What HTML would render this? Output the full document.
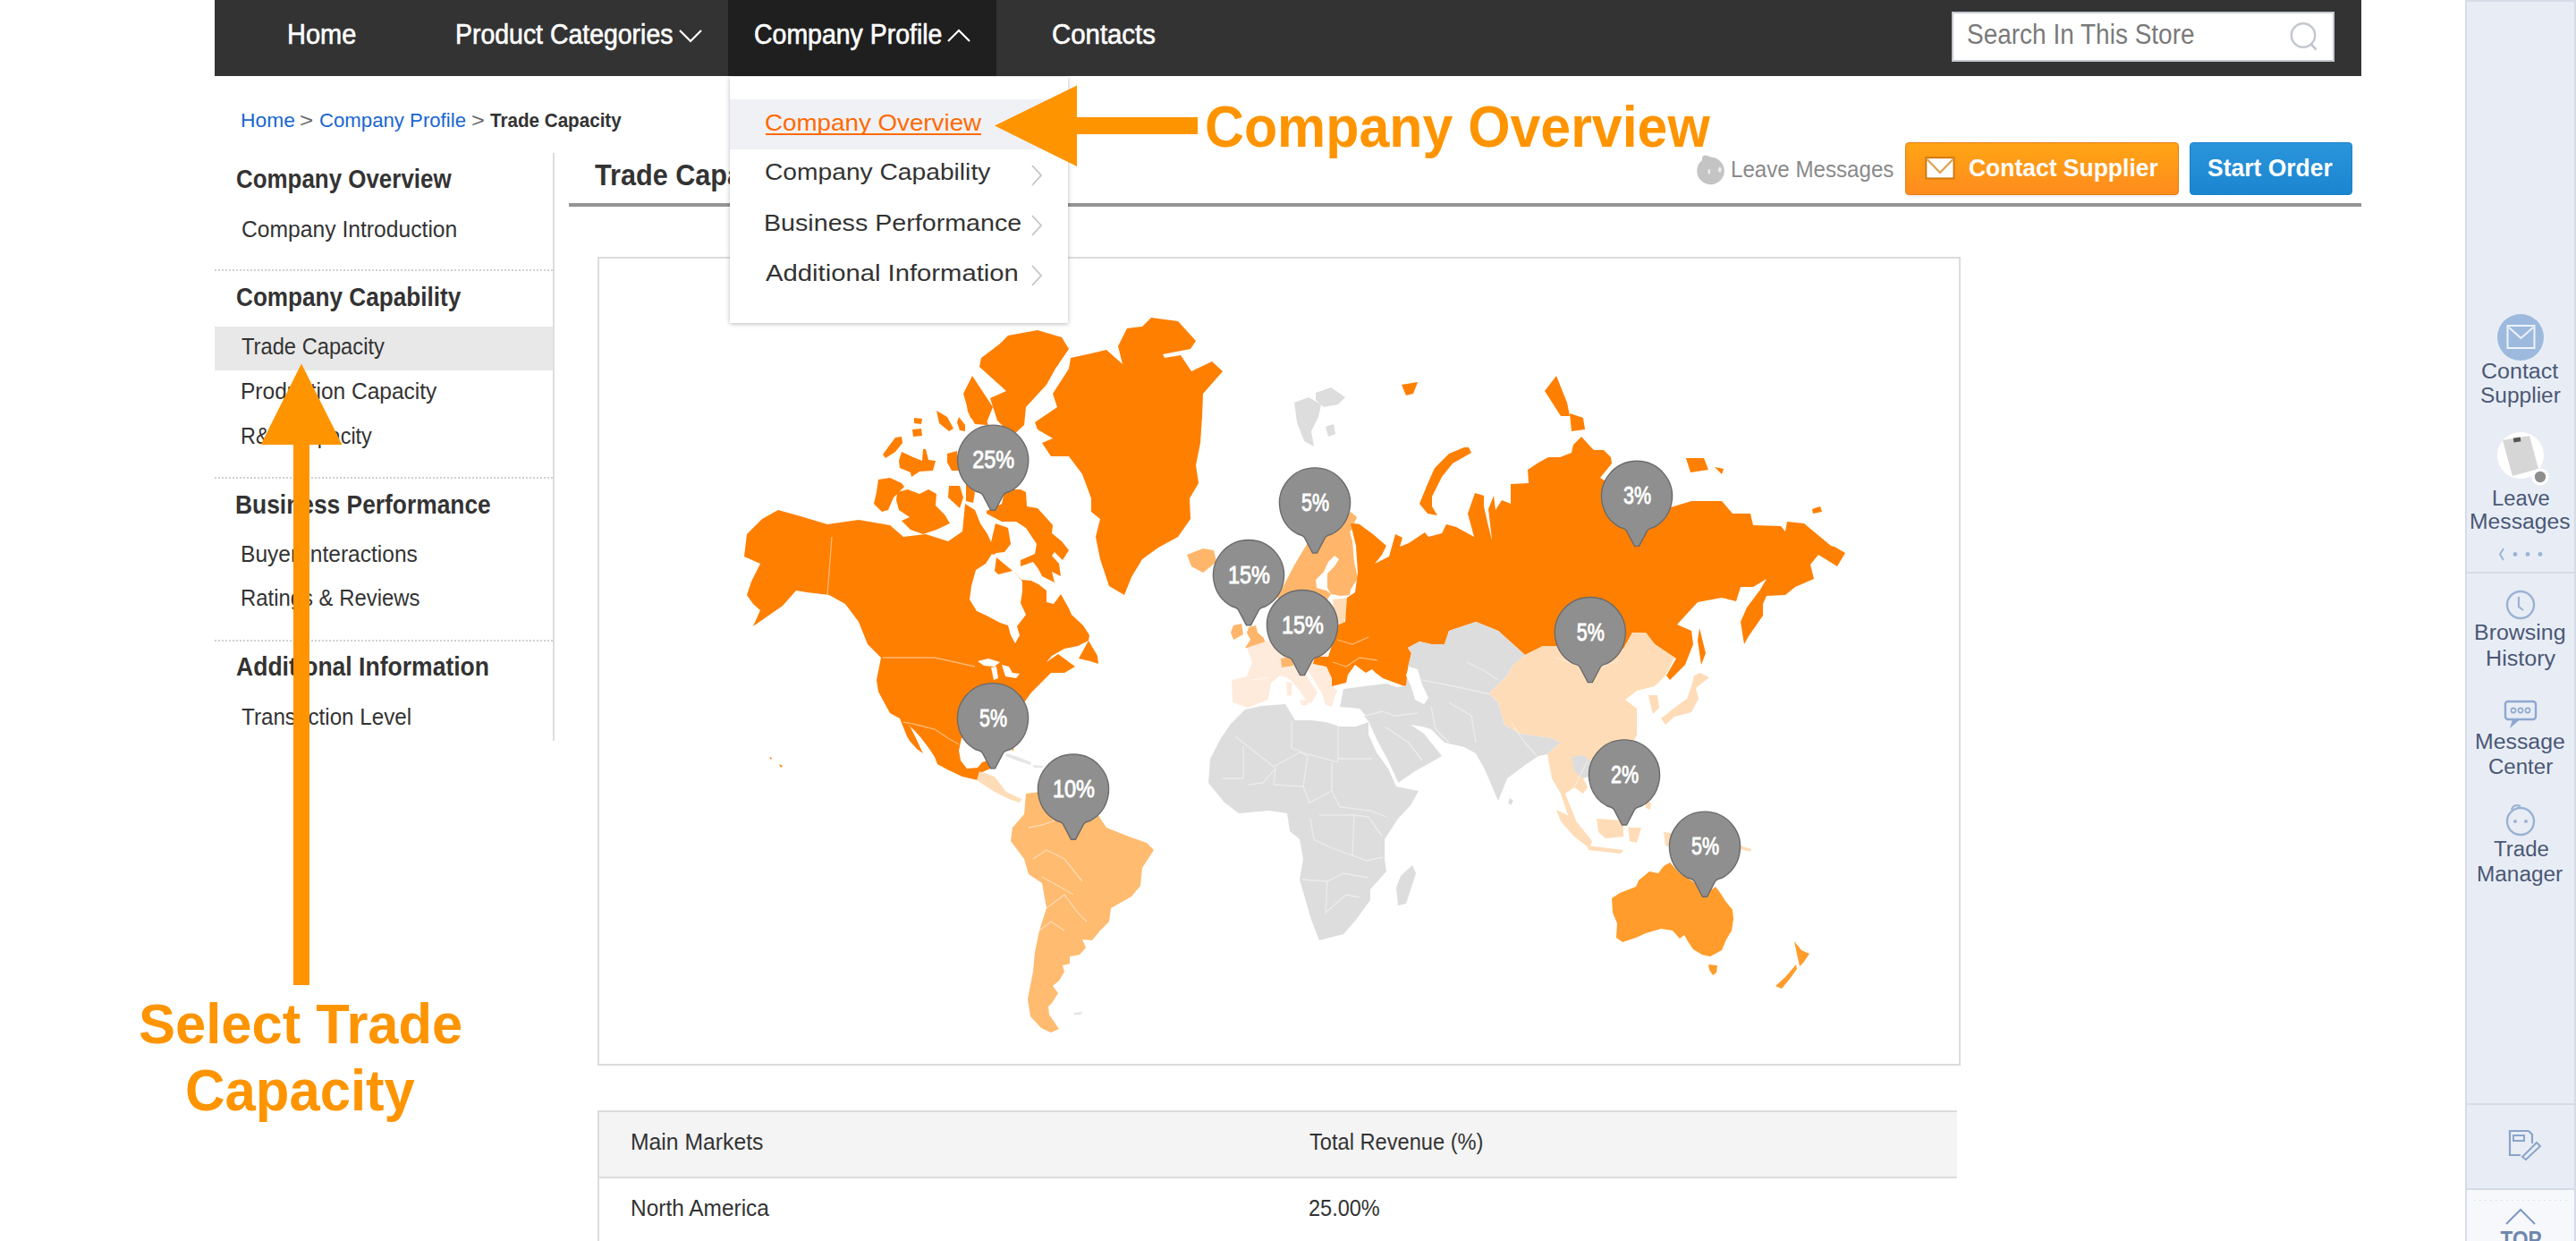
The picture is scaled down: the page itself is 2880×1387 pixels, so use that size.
<!DOCTYPE html>
<html><head><meta charset="utf-8">
<style>
html,body{margin:0;padding:0;}
body{width:2880px;height:1387px;overflow:hidden;background:#fff;position:relative;font-family:"Liberation Sans",sans-serif;}
.a{position:absolute;}
.tx{position:absolute;line-height:1;white-space:nowrap;transform-origin:0 0;z-index:10;}
#nav{left:240px;top:0;width:2400px;height:85px;background:#333;}
#navact{left:814px;top:0;width:300px;height:85px;background:#1f1f1f;}
#search{left:2182px;top:13px;width:424px;height:52px;background:#fff;border:2px solid #c6cad2;}
#rs{left:2756px;top:0;width:120px;height:1387px;background:#e8edf5;border-left:2px solid #d5dce8;border-right:2px solid #d5dce8;border-top:2px solid #d5dce8;}
#rsbot{left:2758px;top:1330px;width:120px;height:57px;background:#f6f8fb;}
.hl{height:2px;background:#d5dce8;}
#vline{left:618px;top:171px;width:2px;height:657px;background:#dedede;}
.dot{left:240px;width:378px;height:0;border-top:2px dotted #d0d0d0;}
#hlrow{left:240px;top:365px;width:378px;height:49px;background:#e8e8e8;}
#tul{left:636px;top:227px;width:2004px;height:4px;background:#959595;}
#cbtn{left:2130px;top:159px;width:304px;height:57px;border:1px solid #e57d12;border-radius:4px;background:linear-gradient(#ffa514,#ff8b1e);box-shadow:0 2px 2px rgba(0,0,0,0.08);}
#sbtn{left:2448px;top:159px;width:180px;height:57px;border:1px solid #1681cc;border-radius:4px;background:linear-gradient(#2a95db,#1b85d0);}
#mapbox{left:668px;top:287px;width:1520px;height:900px;border:2px solid #dcdcdc;}
#tbl{left:668px;top:1241px;width:1518px;height:200px;border-left:2px solid #dcdcdc;border-top:2px solid #dcdcdc;}
#thead{left:670px;top:1243px;width:1518px;height:72px;background:#f4f4f4;border-bottom:2px solid #dcdcdc;}
#dd{left:816px;top:86px;width:378px;height:275px;background:#fff;box-shadow:0 1px 5px rgba(0,0,0,0.28);z-index:5;}
#ddhl{left:816px;top:111px;width:378px;height:56px;background:#f0f1f5;z-index:6;}
.ddt{z-index:7;}
#mapsvg{left:0;top:0;z-index:2;}
#annsvg{left:0;top:0;z-index:20;}
#iconsvg{left:0;top:0;z-index:3;}
</style></head><body>
<div class="a" id="nav"></div>
<div class="a" id="navact"></div>
<div class="a" id="search"></div>
<div class="a" id="rs"></div>
<div class="a" id="rsbot"></div>
<div class="a hl" style="left:2758px;top:639px;width:120px;height:2px;"></div>
<div class="a hl" style="left:2758px;top:1233px;width:120px;"></div>
<div class="a hl" style="left:2758px;top:1328px;width:120px;"></div>
<div class="a" id="vline"></div>
<div class="a dot" style="top:301px"></div>
<div class="a dot" style="top:533px"></div>
<div class="a dot" style="top:715px"></div>
<div class="a" id="hlrow"></div>
<div class="a" id="tul"></div>
<div class="a" id="cbtn"></div>
<div class="a" id="sbtn"></div>
<div class="a" id="mapbox"></div>
<div class="a" id="tbl"></div>
<div class="a" id="thead"></div>
<div class="a" id="dd"></div>
<div class="a" id="ddhl"></div>
<div class="a" style="left:856px;top:149px;width:241px;height:2px;background:#ff6a00;z-index:8;"></div>
<svg class="a" id="iconsvg" width="2880" height="1387" viewBox="0 0 2880 1387">
 <!-- nav carets -->
 <polyline points="760,34 772,46 784,34" fill="none" stroke="#fff" stroke-width="2.2"/>
 <polyline points="1060,46 1072,34 1084,46" fill="none" stroke="#fff" stroke-width="2.2"/>
 <!-- search icon -->
 <circle cx="2575" cy="39.5" r="13.2" fill="none" stroke="#c3c7cf" stroke-width="2.5"/>
 <line x1="2583.5" y1="49" x2="2589.5" y2="55.5" stroke="#c3c7cf" stroke-width="2.6"/>
 <!-- leave messages icon -->
 <circle cx="1912.5" cy="191" r="15.3" fill="#c4c4c4"/>
 <path d="M1903 180 Q1902 172 1909 174 Q1914 176 1916 177 Z" fill="#c4c4c4"/>
 <ellipse cx="1910.8" cy="191.8" rx="1.4" ry="3" fill="#ececec"/><ellipse cx="1922.8" cy="189.8" rx="1.8" ry="3" fill="#ececec"/>
 <!-- mail icon on button -->
 <rect x="2153.3" y="176.2" width="31.2" height="23.2" fill="#fff" stroke="#d07a10" stroke-width="2"/>
 <polyline points="2154.5,178 2169,193 2183.5,178" fill="none" stroke="#dca050" stroke-width="2.2"/>
 <!-- right sidebar icons -->
 <circle cx="2818" cy="377" r="26" fill="#9dbade"/>
 <rect x="2803.5" y="364" width="30" height="25" fill="none" stroke="#eef3fa" stroke-width="2"/>
 <polyline points="2805,366 2818.5,378 2832,366" fill="none" stroke="#eef3fa" stroke-width="2"/>
 <circle cx="2818" cy="509" r="26" fill="#fff"/>
 <polygon points="2798,492 2828,487 2838,524 2809,532" fill="#d6d6d6"/>
 <rect x="2810" y="489" width="8" height="5" fill="#555" transform="rotate(-9 2814 491)"/>
 <circle cx="2840" cy="533" r="9.5" fill="#fff"/><circle cx="2840" cy="533" r="6.2" fill="#8e8e8e"/>
 <polyline points="2799,613 2795,619.5 2799,626" fill="none" stroke="#9db4d6" stroke-width="2"/>
 <circle cx="2812" cy="619.5" r="2.4" fill="#9db4d6"/><circle cx="2826" cy="619.5" r="2.4" fill="#9db4d6"/><circle cx="2840" cy="619.5" r="2.4" fill="#9db4d6"/>
 <circle cx="2818" cy="676" r="15" fill="none" stroke="#9bb2d4" stroke-width="2.4"/>
 <polyline points="2816,667 2816,678 2821,682" fill="none" stroke="#9bb2d4" stroke-width="2.2"/>
 <rect x="2801" y="784" width="34" height="20" rx="3" fill="none" stroke="#8ea8cf" stroke-width="2.4"/>
 <polyline points="2810,804 2808,811 2816,804" fill="#8ea8cf" stroke="#8ea8cf" stroke-width="2"/>
 <circle cx="2810" cy="794" r="2.6" fill="none" stroke="#8ea8cf" stroke-width="1.6"/><circle cx="2818" cy="794" r="2.6" fill="none" stroke="#8ea8cf" stroke-width="1.6"/><circle cx="2826" cy="794" r="2.6" fill="none" stroke="#8ea8cf" stroke-width="1.6"/>
 <circle cx="2818" cy="918" r="15" fill="none" stroke="#9bb2d4" stroke-width="2.4"/>
 <circle cx="2812" cy="918" r="2" fill="#9bb2d4"/><circle cx="2824" cy="918" r="2" fill="#9bb2d4"/>
 <path d="M2808 905 Q2810 898 2818 901" fill="none" stroke="#9bb2d4" stroke-width="2.2"/>
 <path d="M2827 1264 L2806 1264 L2806 1291 L2818 1291" fill="none" stroke="#8aa4cb" stroke-width="2.2"/>
 <path d="M2827 1264 L2831 1268 L2831 1278" fill="none" stroke="#8aa4cb" stroke-width="2.2"/>
 <rect x="2810" y="1269" width="12" height="6" fill="none" stroke="#8aa4cb" stroke-width="2"/>
 <path d="M2820 1293 L2836 1277 L2840 1281 L2824 1296 Z" fill="none" stroke="#8aa4cb" stroke-width="2"/>
 <polyline points="2802,1368 2818,1352 2834,1368" fill="none" stroke="#7f9ac2" stroke-width="2"/>
 <text x="2818.5" y="1394" font-family="Liberation Sans" font-weight="bold" font-size="26" fill="#6f87ad" text-anchor="middle" textLength="46" lengthAdjust="spacingAndGlyphs">TOP</text>
 <line x1="2766" y1="1341.5" x2="2872" y2="1341.5" stroke="#dde3ec" stroke-width="1" stroke-dasharray="2 4"/>
 <!-- dropdown chevrons -->
</svg>
<svg class="a" width="2880" height="1387" viewBox="0 0 2880 1387" style="left:0;top:0;z-index:9">
 <polyline points="1154,185 1164,196 1154,207" fill="none" stroke="#c4c4c4" stroke-width="1.8"/>
 <polyline points="1154,241 1164,252 1154,263" fill="none" stroke="#c4c4c4" stroke-width="1.8"/>
 <polyline points="1154,297 1164,308 1154,319" fill="none" stroke="#c4c4c4" stroke-width="1.8"/>
</svg>
<svg class="a" id="mapsvg" width="2880" height="1387" viewBox="0 0 2880 1387">
<polygon fill="#ff7f00" points="835,597 852,580 870,570 895,577 925,586 960,581 995,587 1010,600 1035,597 1060,605 1076,594 1079,563 1090,570 1096,585 1104,597 1108,606 1113,585 1127,590 1130,608 1123,617 1114,618 1109,621 1136,641 1142,648 1153,649 1161,653 1170,660 1170,673 1178,675 1186,664 1195,680 1198,687 1211,699 1218,710 1217,716 1205,722 1190,725 1176,733 1170,740 1183,731 1202,745 1190,752 1175,752 1167,760 1153,774 1145,785 1138,800 1132,815 1133,840 1125,828 1110,822 1095,818 1080,822 1075,825 1072,839 1074,850 1081,859 1093,858 1098,852 1104,850 1107,859 1096,864 1093,872 1076,868 1059,860 1048,854 1045,846 1039,837 1030,825 1022,816 1015,810 1018,813 1023,823 1030,838 1032,842 1025,837 1017,828 1014,823 1008,808 1006,803 995,797 989,786 982,773 980,760 985,735 970,720 960,695 945,675 927,665 902,662 890,660 875,677 842,700 850,682 842,675 835,665 840,650 850,630 832,622"/>
<polygon fill="#ff7f00" points="1206,736 1217,716 1227,733 1228,742 1219,739"/>
<polygon fill="#ffffff" points="1109,619 1102,630 1091,637 1086,655 1084,670 1092,683 1103,688 1118,696 1127,699 1130,710 1135,719 1140,710 1137,700 1147,687 1141,674 1143,661 1143,650 1136,641"/>
<polygon fill="#ff7f00" points="1114,623 1132,638 1116,642 1112,638"/>
<polygon fill="#ffffff" points="1093,739 1105,736 1118,740 1112,745 1100,744"/>
<polygon fill="#ffffff" points="1108,746 1114,745 1116,758 1111,760"/>
<polygon fill="#ffffff" points="1120,743 1128,745 1132,752 1140,753 1136,758 1124,756"/>
<polygon fill="#ff7f00" points="1022,467 1031,468 1030,474 1022,473"/>
<polygon fill="#ff7f00" points="1020,480 1030,479 1031,487 1021,488"/>
<polygon fill="#ff7f00" points="1008,488 1009,495 1001,505 990,512 987,508 995,497 1001,489"/>
<polygon fill="#ff7f00" points="1008,505 1021,511 1031,515 1032,502 1035,502 1038,514 1046,515 1043,526 1028,527 1019,533 1018,528 1006,523 1005,515"/>
<polygon fill="#ff7f00" points="1047,459 1059,466 1066,479 1061,482 1050,473"/>
<polygon fill="#ff7f00" points="1072,466 1079,475 1079,482 1073,481 1070,472"/>
<polygon fill="#ff7f00" points="1059,507 1070,504 1072,526 1064,526 1059,517"/>
<polygon fill="#ff7f00" points="982,536 995,534 1008,540 1011,544 999,556 993,570 986,572 977,563 980,550"/>
<polygon fill="#ff7f00" points="1003,550 1015,547 1028,552 1038,547 1047,552 1046,565 1056,575 1062,585 1047,592 1032,597 1018,592 1008,582 1017,578 1005,570 1002,559"/>
<polygon fill="#ff7f00" points="1061,543 1073,543 1077,556 1073,568 1060,556"/>
<polygon fill="#ff7f00" points="1080,541 1090,550 1088,562 1080,560"/>
<polygon fill="#ff7f00" points="1103,571 1120,563 1123,549 1131,547 1141,547 1147,550 1148,566 1160,568 1170,579 1177,587 1176,596 1187,605 1195,615 1188,626 1179,617 1176,621 1184,630 1186,644 1176,639 1179,651 1165,644 1161,636 1155,628 1141,633 1141,626 1157,619 1159,608 1153,599 1147,590 1136,583 1120,583 1103,574"/>
<polygon fill="#ff7f00" points="1079,440 1092,445 1105,475 1090,474 1082,460"/>
<polygon fill="#ff7f00" points="1127,375 1160,369 1187,377 1195,390 1180,412 1170,430 1147,455 1145,475 1132,487 1115,470 1107,445 1125,437 1095,410 1097,400 1117,385"/>
<polygon fill="#ff7f00" points="1087,420 1110,455 1102,475 1085,467 1077,440"/>
<polygon fill="#ff7f00" points="1287,355 1317,359 1337,381 1331,390 1300,396 1302,400 1320,397 1332,415 1355,404 1367,415 1345,440 1344,465 1342,495 1337,520 1340,540 1330,557 1331,580 1317,600 1295,612 1277,625 1265,645 1257,665 1240,655 1230,625 1225,600 1230,580 1220,572 1220,557 1210,530 1195,510 1175,510 1165,495 1177,490 1160,480 1157,472 1182,455 1177,440 1195,412 1197,400 1220,395 1237,391 1255,407 1250,387 1260,367 1277,365"/>
<polygon fill="#ffb66b" points="1327,620 1345,613 1357,615 1360,628 1345,640 1332,633"/>
<polygon fill="#ffb66b" points="1396,701 1404,699 1406,707 1413,713 1415,720 1404,724 1392,724 1398,715 1394,707"/>
<polygon fill="#ffb66b" points="1379,699 1388,697 1390,709 1379,715 1376,707"/>
<polygon fill="#ffebdc" points="1394,724 1430,712 1470,710 1485,734 1470,734 1468,742 1483,745 1489,758 1489,767 1495,772 1491,782 1489,790 1482,788 1478,775 1470,762 1462,748 1458,749 1465,762 1473,774 1466,786 1461,784 1453,772 1444,761 1438,757 1431,755 1421,763 1418,782 1395,791 1378,785 1377,760 1394,756 1400,740"/>
<polygon fill="#ffebdc" points="1453,782 1463,783 1462,788 1455,788"/>
<polygon fill="#ffebdc" points="1438,762 1444,763 1444,777 1439,778"/>
<polygon fill="#ffb66b" points="1432,736 1444,734 1446,744 1433,746"/>
<polygon fill="#ffb66b" points="1510,572 1517,578 1514,585 1519,585 1509,594 1512,605 1514,628 1518,646 1510,659 1509,665 1499,666 1488,664 1470,690 1455,690 1440,680 1428,668 1448,630 1463,605 1480,595 1499,585"/>
<polygon fill="#ffffff" points="1492,621 1497,625 1492,633 1484,641 1484,657 1488,664 1483,660 1472,657 1471,648 1480,639 1485,628"/>
<polygon fill="#ffdcb8" points="1490,670 1508,668 1506,684 1501,700 1492,698"/>
<polygon fill="#ff7f00" points="1510,585 1520,586 1535,597 1550,610 1545,620 1537,630 1553,622 1560,597 1568,601 1565,611 1575,607 1593,595 1597,600 1612,596 1617,586 1628,589 1648,600 1641,574 1649,551 1659,554 1659,566 1663,584 1668,604 1656,616 1668,603 1664,569 1670,554 1672,570 1679,559 1689,563 1689,541 1709,540 1708,525 1720,517 1731,511 1744,511 1757,506 1759,497 1768,488 1778,499 1782,503 1793,503 1801,511 1802,518 1789,534 1830,560 1868,567 1891,560 1925,560 1937,574 1957,574 1960,587 1991,588 1996,594 1998,583 2017,585 2047,610 2051,611 2063,618 2054,633 2033,620 2024,631 2028,647 2007,656 1996,665 1975,666 1971,675 1971,688 1955,711 1950,720 1946,695 1953,679 1968,659 1975,647 1960,656 1946,656 1941,672 1925,668 1898,673 1875,698 1891,705 1893,720 1884,743 1867,760 1863,755 1874,736 1850,720 1840,707 1825,707 1815,725 1785,722 1725,722 1705,732 1675,705 1650,695 1620,705 1615,720 1600,720 1587,717 1574,724 1578,730 1574,746 1576,746 1573,768 1546,758 1538,752 1534,748 1527,752 1515,743 1507,754 1505,763 1489,767 1489,758 1483,745 1468,742 1470,734 1485,734 1491,715 1495,699 1504,695 1506,668 1515,662 1518,640 1516,610"/>
<polygon fill="#ff7f00" points="1642,500 1645,506 1624,518 1612,533 1601,555 1601,566 1607,576 1596,574 1587,563 1596,541 1604,523 1620,507 1637,500"/>
<polygon fill="#ff7f00" points="1727,437 1740,420 1752,450 1755,465 1745,465"/>
<polygon fill="#ff7f00" points="1755,462 1770,467 1772,480 1757,482"/>
<polygon fill="#ff7f00" points="1567,430 1585,427 1580,440 1572,442"/>
<polygon fill="#ff7f00" points="1885,512 1905,512 1910,525 1890,528"/>
<polygon fill="#ff7f00" points="1917,522 1927,524 1925,530"/>
<polygon fill="#ff7f00" points="1900,702 1907,730 1902,743 1898,716"/>
<polygon fill="#ff7f00" points="2026,569 2035,566 2037,572 2027,574"/>
<polygon fill="#dddddd" points="1447,450 1463,444 1477,452 1474,466 1466,482 1469,499 1458,493 1450,472"/>
<polygon fill="#dddddd" points="1471,439 1488,433 1504,444 1496,452 1480,455 1471,447"/>
<polygon fill="#dddddd" points="1482,477 1491,474 1493,485 1485,488"/>
<polygon fill="#dddddd" points="1525,800 1530,815 1545,845 1560,877 1582,862 1612,845 1600,830 1592,820 1577,810 1590,812 1600,815 1615,830 1637,835 1650,842 1660,860 1675,895 1685,870 1705,855 1720,845 1730,843 1745,830 1735,825 1700,820 1682,810 1675,785 1665,775 1685,755 1690,745 1705,732 1675,705 1650,695 1620,705 1615,720 1600,720 1587,717 1574,724 1578,730 1574,746 1572,766 1562,768 1550,764 1525,767 1502,770 1500,780 1498,790 1520,792 1527,800"/>
<polygon fill="#ffffff" points="1524,799 1530,806 1540,828 1552,850 1562,872 1566,880 1560,880 1548,858 1536,836 1526,814 1521,802"/>
<polygon fill="#ffffff" points="1575,745 1585,748 1590,765 1597,780 1592,787 1582,782 1578,768 1572,755"/>
<polygon fill="#dddddd" points="1688,892 1692,895 1689,900 1686,897"/>
<polygon fill="#dddddd" points="1376,809 1392,793 1410,789 1437,787 1448,805 1466,805 1482,807 1498,812 1516,812 1530,807 1530,821 1539,841 1552,859 1561,879 1586,884 1577,900 1563,915 1548,938 1548,960 1550,974 1532,994 1532,1006 1516,1028 1502,1044 1475,1051 1466,1028 1453,983 1457,960 1453,938 1442,929 1439,909 1419,906 1385,909 1369,897 1351,875 1353,848 1365,825"/>
<polygon fill="#dddddd" points="1579,967 1583,976 1572,1010 1563,1012 1561,992 1566,979"/>
<polygon fill="#ffbb70" points="1147,887 1162,885 1190,895 1225,907 1237,925 1262,935 1282,942 1290,950 1277,970 1275,990 1265,1002 1242,1015 1240,1030 1230,1040 1221,1051 1210,1050 1214,1059 1207,1067 1196,1069 1196,1077 1188,1079 1190,1086 1184,1096 1177,1102 1183,1110 1176,1121 1172,1125 1173,1134 1184,1150 1175,1154 1164,1149 1152,1136 1149,1117 1151,1106 1155,1086 1157,1064 1162,1040 1170,1015 1165,987 1150,977 1145,960 1130,940 1132,925 1145,910"/>
<polygon fill="#ffdcb8" points="1092,872 1095,862 1112,868 1125,885 1142,893 1140,897 1128,893 1112,885"/>
<polygon fill="#ffdcb8" points="1705,732 1725,722 1785,722 1815,725 1825,707 1840,707 1850,720 1872,735 1862,755 1850,767 1830,772 1817,782 1830,792 1830,805 1830,822 1822,835 1800,845 1780,852 1775,855 1770,870 1775,880 1770,887 1760,880 1750,887 1762,917 1755,917 1745,887 1735,870 1730,843 1745,830 1735,825 1700,820 1682,810 1675,785 1665,775 1685,755 1690,745"/>
<polygon fill="#dddddd" points="1757,846 1770,844 1778,850 1777,868 1770,870 1760,862"/>
<polygon fill="#ffdcb8" points="1843,777 1853,777 1855,791 1848,798 1845,786"/>
<polygon fill="#ffdcb8" points="1901,752 1911,757 1896,769 1899,781 1891,796 1872,801 1862,810 1857,803 1872,791 1886,781 1891,767 1894,755"/>
<polygon fill="#ffdcb8" points="1740,905 1760,915 1780,940 1777,948 1760,935 1745,918"/>
<polygon fill="#ffdcb8" points="1775,945 1815,950 1812,954 1776,950"/>
<polygon fill="#ffdcb8" points="1785,915 1815,917 1815,935 1795,937 1787,930"/>
<polygon fill="#ffdcb8" points="1820,925 1835,925 1830,942 1822,940"/>
<polygon fill="#ffdcb8" points="1860,930 1900,935 1930,955 1925,965 1890,955 1862,945"/>
<polygon fill="#e6e6e6" points="1125,842 1138,846 1153,852 1152,855 1137,850 1124,845"/>
<polygon fill="#e6e6e6" points="1155,855 1167,856 1166,858 1156,858"/>
<polygon fill="#ffdcb8" points="1839,895 1846,897 1845,905 1840,903"/>
<polygon fill="#ffdcb8" points="1945,945 1958,949 1957,952 1946,949"/>
<polygon fill="#ff7f00" points="860,846 863,847 862,849"/>
<polygon fill="#ff7f00" points="871,854 875,856 873,858"/>
<polygon fill="#e6e6e6" points="1200,1132 1210,1131 1209,1134 1201,1134"/>
<polygon fill="#ff9c2b" points="1802,1004 1811,998 1829,991 1832,984 1844,974 1854,976 1860,968 1867,964 1878,976 1894,986 1906,1000 1918,991 1924,999 1929,1007 1937,1017 1938,1027 1936,1040 1930,1050 1925,1062 1912,1069 1903,1067 1893,1061 1887,1052 1883,1045 1878,1049 1870,1040 1857,1038 1840,1043 1829,1048 1814,1053 1807,1048 1808,1032 1803,1020"/>
<polygon fill="#ff9c2b" points="1910,1078 1920,1079 1919,1087 1915,1090 1911,1084"/>
<polygon fill="#ff9c2b" points="2006,1052 2014,1062 2023,1066 2016,1076 2012,1080 2010,1071"/>
<polygon fill="#ff9c2b" points="2008,1078 2009,1083 2001,1094 1992,1105 1985,1102 1996,1092"/>
<polyline fill="none" stroke="#ffffff" stroke-opacity="0.45" stroke-width="1.3" points="1444,806 1444,836 1462,843 1496,852 1496,809"/>
<polyline fill="none" stroke="#ffffff" stroke-opacity="0.45" stroke-width="1.3" points="1496,848 1534,848"/>
<polyline fill="none" stroke="#ffffff" stroke-opacity="0.45" stroke-width="1.3" points="1489,852 1489,884 1498,902 1532,906 1550,913"/>
<polyline fill="none" stroke="#ffffff" stroke-opacity="0.45" stroke-width="1.3" points="1381,823 1424,857 1453,841 1462,845"/>
<polyline fill="none" stroke="#ffffff" stroke-opacity="0.45" stroke-width="1.3" points="1390,834 1390,870 1367,870"/>
<polyline fill="none" stroke="#ffffff" stroke-opacity="0.45" stroke-width="1.3" points="1396,877 1412,875 1426,859 1424,877 1457,879 1462,845"/>
<polyline fill="none" stroke="#ffffff" stroke-opacity="0.45" stroke-width="1.3" points="1457,879 1464,897 1489,884"/>
<polyline fill="none" stroke="#ffffff" stroke-opacity="0.45" stroke-width="1.3" points="1475,911 1514,911 1512,956 1487,947 1469,938 1465,915"/>
<polyline fill="none" stroke="#ffffff" stroke-opacity="0.45" stroke-width="1.3" points="1455,983 1484,985 1502,976 1530,981"/>
<polyline fill="none" stroke="#ffffff" stroke-opacity="0.45" stroke-width="1.3" points="1484,985 1482,1020 1505,1000 1520,1003"/>
<polyline fill="none" stroke="#ffffff" stroke-opacity="0.45" stroke-width="1.3" points="1514,911 1530,913 1545,934"/>
<polyline fill="none" stroke="#ffffff" stroke-opacity="0.45" stroke-width="1.3" points="1512,956 1528,962 1546,958"/>
<polyline fill="none" stroke="#ffffff" stroke-opacity="0.45" stroke-width="1.3" points="1527,800 1545,795 1560,800 1585,797"/>
<polyline fill="none" stroke="#ffffff" stroke-opacity="0.45" stroke-width="1.3" points="1548,812 1575,830 1590,850"/>
<polyline fill="none" stroke="#ffffff" stroke-opacity="0.45" stroke-width="1.3" points="1600,790 1605,815 1620,830"/>
<polyline fill="none" stroke="#ffffff" stroke-opacity="0.45" stroke-width="1.3" points="1620,785 1645,800 1650,830"/>
<polyline fill="none" stroke="#ffffff" stroke-opacity="0.45" stroke-width="1.3" points="1590,760 1615,765 1640,770 1665,776"/>
<polyline fill="none" stroke="#ffffff" stroke-opacity="0.45" stroke-width="1.3" points="1640,740 1660,750 1675,760"/>
<polyline fill="none" stroke="#ffffff" stroke-opacity="0.45" stroke-width="1.3" points="1690,808 1705,830 1718,845"/>
<polyline fill="none" stroke="#ffffff" stroke-opacity="0.45" stroke-width="1.3" points="1740,735 1760,742 1790,745 1810,738"/>
<polyline fill="none" stroke="#ffffff" stroke-opacity="0.45" stroke-width="1.3" points="1760,880 1770,860 1775,850"/>
<polyline fill="none" stroke="#ffffff" stroke-opacity="0.45" stroke-width="1.3" points="1490,740 1505,745 1520,735 1540,738"/>
<polyline fill="none" stroke="#ffffff" stroke-opacity="0.45" stroke-width="1.3" points="1495,715 1512,720 1530,712"/>
<polyline fill="none" stroke="#ffffff" stroke-opacity="0.45" stroke-width="1.3" points="1400,760 1420,757"/>
<polyline fill="none" stroke="#ffffff" stroke-opacity="0.45" stroke-width="1.3" points="1150,925 1165,922 1185,915"/>
<polyline fill="none" stroke="#ffffff" stroke-opacity="0.45" stroke-width="1.3" points="1155,960 1170,950 1190,960 1210,985"/>
<polyline fill="none" stroke="#ffffff" stroke-opacity="0.45" stroke-width="1.3" points="1170,1015 1190,1000 1205,1020 1215,1030"/>
<polyline fill="none" stroke="#ffffff" stroke-opacity="0.45" stroke-width="1.3" points="1162,1040 1175,1030 1190,1040"/>
<polyline fill="none" stroke="#ffffff" stroke-opacity="0.45" stroke-width="1.3" points="1165,980 1183,990 1200,1000"/>
<polyline fill="none" stroke="#ffffff" stroke-opacity="0.45" stroke-width="1.3" points="987,735 1045,735 1090,745"/>
<polyline fill="none" stroke="#ffffff" stroke-opacity="0.45" stroke-width="1.3" points="1010,807 1025,810 1045,815 1060,825 1072,832"/>
<polyline fill="none" stroke="#ffffff" stroke-opacity="0.45" stroke-width="1.3" points="925,665 930,600"/>
<path transform="translate(1110.2 514.7)" d="M-19,34.6 A39.5,39.5 0 1 1 19,34.6 Q13,36 11.5,38.5 L2.5,55.6 L-2.5,55.6 L-11.5,38.5 Q-13,36 -19,34.6 Z" fill="#8f8f8f" stroke="#6b6b6b" stroke-width="1.4"/>
<text x="1110.7" y="523.2" font-family="Liberation Sans" font-size="27.3" fill="#fff" stroke="#fff" stroke-width="0.9" text-anchor="middle" textLength="47" lengthAdjust="spacingAndGlyphs">25%</text>
<path transform="translate(1110 803.2)" d="M-19,34.6 A39.5,39.5 0 1 1 19,34.6 Q13,36 11.5,38.5 L2.5,55.6 L-2.5,55.6 L-11.5,38.5 Q-13,36 -19,34.6 Z" fill="#8f8f8f" stroke="#6b6b6b" stroke-width="1.4"/>
<text x="1110.5" y="811.7" font-family="Liberation Sans" font-size="27.3" fill="#fff" stroke="#fff" stroke-width="0.9" text-anchor="middle" textLength="31" lengthAdjust="spacingAndGlyphs">5%</text>
<path transform="translate(1200 882.6)" d="M-19,34.6 A39.5,39.5 0 1 1 19,34.6 Q13,36 11.5,38.5 L2.5,55.6 L-2.5,55.6 L-11.5,38.5 Q-13,36 -19,34.6 Z" fill="#8f8f8f" stroke="#6b6b6b" stroke-width="1.4"/>
<text x="1200.5" y="891.1" font-family="Liberation Sans" font-size="27.3" fill="#fff" stroke="#fff" stroke-width="0.9" text-anchor="middle" textLength="47" lengthAdjust="spacingAndGlyphs">10%</text>
<path transform="translate(1396 643.1)" d="M-19,34.6 A39.5,39.5 0 1 1 19,34.6 Q13,36 11.5,38.5 L2.5,55.6 L-2.5,55.6 L-11.5,38.5 Q-13,36 -19,34.6 Z" fill="#8f8f8f" stroke="#6b6b6b" stroke-width="1.4"/>
<text x="1396.5" y="651.6" font-family="Liberation Sans" font-size="27.3" fill="#fff" stroke="#fff" stroke-width="0.9" text-anchor="middle" textLength="47" lengthAdjust="spacingAndGlyphs">15%</text>
<path transform="translate(1456 699)" d="M-19,34.6 A39.5,39.5 0 1 1 19,34.6 Q13,36 11.5,38.5 L2.5,55.6 L-2.5,55.6 L-11.5,38.5 Q-13,36 -19,34.6 Z" fill="#8f8f8f" stroke="#6b6b6b" stroke-width="1.4"/>
<text x="1456.5" y="707.5" font-family="Liberation Sans" font-size="27.3" fill="#fff" stroke="#fff" stroke-width="0.9" text-anchor="middle" textLength="47" lengthAdjust="spacingAndGlyphs">15%</text>
<path transform="translate(1470 562.4)" d="M-19,34.6 A39.5,39.5 0 1 1 19,34.6 Q13,36 11.5,38.5 L2.5,55.6 L-2.5,55.6 L-11.5,38.5 Q-13,36 -19,34.6 Z" fill="#8f8f8f" stroke="#6b6b6b" stroke-width="1.4"/>
<text x="1470.5" y="570.9" font-family="Liberation Sans" font-size="27.3" fill="#fff" stroke="#fff" stroke-width="0.9" text-anchor="middle" textLength="31" lengthAdjust="spacingAndGlyphs">5%</text>
<path transform="translate(1830 554.8)" d="M-19,34.6 A39.5,39.5 0 1 1 19,34.6 Q13,36 11.5,38.5 L2.5,55.6 L-2.5,55.6 L-11.5,38.5 Q-13,36 -19,34.6 Z" fill="#8f8f8f" stroke="#6b6b6b" stroke-width="1.4"/>
<text x="1830.5" y="563.3" font-family="Liberation Sans" font-size="27.3" fill="#fff" stroke="#fff" stroke-width="0.9" text-anchor="middle" textLength="31" lengthAdjust="spacingAndGlyphs">3%</text>
<path transform="translate(1777.8 707)" d="M-19,34.6 A39.5,39.5 0 1 1 19,34.6 Q13,36 11.5,38.5 L2.5,55.6 L-2.5,55.6 L-11.5,38.5 Q-13,36 -19,34.6 Z" fill="#8f8f8f" stroke="#6b6b6b" stroke-width="1.4"/>
<text x="1778.3" y="715.5" font-family="Liberation Sans" font-size="27.3" fill="#fff" stroke="#fff" stroke-width="0.9" text-anchor="middle" textLength="31" lengthAdjust="spacingAndGlyphs">5%</text>
<path transform="translate(1816 866.4)" d="M-19,34.6 A39.5,39.5 0 1 1 19,34.6 Q13,36 11.5,38.5 L2.5,55.6 L-2.5,55.6 L-11.5,38.5 Q-13,36 -19,34.6 Z" fill="#8f8f8f" stroke="#6b6b6b" stroke-width="1.4"/>
<text x="1816.5" y="874.9" font-family="Liberation Sans" font-size="27.3" fill="#fff" stroke="#fff" stroke-width="0.9" text-anchor="middle" textLength="31" lengthAdjust="spacingAndGlyphs">2%</text>
<path transform="translate(1906 946.7)" d="M-19,34.6 A39.5,39.5 0 1 1 19,34.6 Q13,36 11.5,38.5 L2.5,55.6 L-2.5,55.6 L-11.5,38.5 Q-13,36 -19,34.6 Z" fill="#8f8f8f" stroke="#6b6b6b" stroke-width="1.4"/>
<text x="1906.5" y="955.2" font-family="Liberation Sans" font-size="27.3" fill="#fff" stroke="#fff" stroke-width="0.9" text-anchor="middle" textLength="31" lengthAdjust="spacingAndGlyphs">5%</text>
</svg>
<div class="tx" style="left:321.28px;top:23.12px;font-size:31.16px;font-weight:normal;color:#fff;transform:scaleX(0.9308);-webkit-text-stroke:0.6px #fff;">Home</div>
<div class="tx" style="left:508.72px;top:23.23px;font-size:30.43px;font-weight:normal;color:#fff;transform:scaleX(0.9348);-webkit-text-stroke:0.6px #fff;">Product Categories</div>
<div class="tx" style="left:842.58px;top:23.23px;font-size:30.43px;font-weight:normal;color:#fff;transform:scaleX(0.9354);-webkit-text-stroke:0.6px #fff;">Company Profile</div>
<div class="tx" style="left:1175.53px;top:23.23px;font-size:30.43px;font-weight:normal;color:#fff;transform:scaleX(0.9654);-webkit-text-stroke:0.6px #fff;">Contacts</div>
<div class="tx" style="left:2198.88px;top:23.03px;font-size:30.43px;font-weight:normal;color:#7a7a7a;transform:scaleX(0.9197);">Search In This Store</div>
<div class="tx" style="left:268.98px;top:123.43px;font-size:22.75px;font-weight:normal;color:#1a66d2;transform:scaleX(1.0026);">Home</div>
<div class="tx" style="left:335.36px;top:123.40px;font-size:22.80px;font-weight:normal;color:#666;transform:scaleX(1.1404);">&gt;</div>
<div class="tx" style="left:356.99px;top:123.43px;font-size:22.75px;font-weight:normal;color:#1a66d2;transform:scaleX(0.9751);">Company Profile</div>
<div class="tx" style="left:526.88px;top:123.40px;font-size:22.80px;font-weight:normal;color:#666;transform:scaleX(1.1140);">&gt;</div>
<div class="tx" style="left:548.09px;top:123.71px;font-size:22.43px;font-weight:bold;color:#333;transform:scaleX(0.9196);">Trade Capacity</div>
<div class="tx" style="left:263.96px;top:186.05px;font-size:29.00px;font-weight:bold;color:#333;transform:scaleX(0.8938);">Company Overview</div>
<div class="tx" style="left:263.95px;top:318.45px;font-size:29.00px;font-weight:bold;color:#333;transform:scaleX(0.9013);">Company Capability</div>
<div class="tx" style="left:263.42px;top:549.65px;font-size:29.00px;font-weight:bold;color:#333;transform:scaleX(0.9092);">Business Performance</div>
<div class="tx" style="left:264.47px;top:731.45px;font-size:29.00px;font-weight:bold;color:#333;transform:scaleX(0.9151);">Additional Information</div>
<div class="tx" style="left:269.57px;top:243.53px;font-size:25.36px;font-weight:normal;color:#333;transform:scaleX(0.9726);">Company Introduction</div>
<div class="tx" style="left:270.33px;top:375.13px;font-size:25.36px;font-weight:normal;color:#333;transform:scaleX(0.9347);">Trade Capacity</div>
<div class="tx" style="left:268.84px;top:424.83px;font-size:25.36px;font-weight:normal;color:#333;transform:scaleX(0.9665);">Production Capacity</div>
<div class="tx" style="left:268.93px;top:474.73px;font-size:25.36px;font-weight:normal;color:#333;transform:scaleX(0.9215);">R&amp;D Capacity</div>
<div class="tx" style="left:268.84px;top:606.83px;font-size:25.36px;font-weight:normal;color:#333;transform:scaleX(0.9682);">Buyer Interactions</div>
<div class="tx" style="left:268.89px;top:656.33px;font-size:25.36px;font-weight:normal;color:#333;transform:scaleX(0.9417);">Ratings &amp; Reviews</div>
<div class="tx" style="left:270.32px;top:788.53px;font-size:25.36px;font-weight:normal;color:#333;transform:scaleX(0.9545);">Transaction Level</div>
<div class="tx" style="left:665.39px;top:178.62px;font-size:33.29px;font-weight:bold;color:#333;transform:scaleX(0.9200);z-index:4;">Trade Capacity</div>
<div class="tx" style="left:854.61px;top:124.41px;font-size:26.09px;font-weight:normal;color:#ff6a00;transform:scaleX(1.0640);">Company Overview</div>
<div class="tx" style="left:854.59px;top:178.81px;font-size:26.09px;font-weight:normal;color:#333;transform:scaleX(1.0812);">Company Capability</div>
<div class="tx" style="left:853.71px;top:236.31px;font-size:26.09px;font-weight:normal;color:#333;transform:scaleX(1.0983);">Business Performance</div>
<div class="tx" style="left:856.00px;top:291.91px;font-size:26.09px;font-weight:normal;color:#333;transform:scaleX(1.1214);">Additional Information</div>
<div class="tx" style="left:1935.07px;top:176.53px;font-size:25.36px;font-weight:normal;color:#8a8a8a;transform:scaleX(0.9516);">Leave Messages</div>
<div class="tx" style="left:2201.44px;top:173.78px;font-size:27.43px;font-weight:bold;color:#fff;transform:scaleX(0.9652);">Contact Supplier</div>
<div class="tx" style="left:2468.47px;top:173.78px;font-size:27.43px;font-weight:bold;color:#fff;transform:scaleX(0.9653);">Start Order</div>
<div class="tx" style="left:705.32px;top:1262.91px;font-size:26.09px;font-weight:normal;color:#333;transform:scaleX(0.9480);">Main Markets</div>
<div class="tx" style="left:1463.53px;top:1262.91px;font-size:26.09px;font-weight:normal;color:#333;transform:scaleX(0.9065);">Total Revenue (%)</div>
<div class="tx" style="left:705.04px;top:1336.71px;font-size:26.09px;font-weight:normal;color:#333;transform:scaleX(0.9379);">North America</div>
<div class="tx" style="left:1462.82px;top:1336.71px;font-size:26.09px;font-weight:normal;color:#333;transform:scaleX(0.9015);">25.00%</div>
<div class="tx" style="left:2774.15px;top:402.94px;font-size:24.64px;font-weight:normal;color:#4b5875;transform:scaleX(1.0164);">Contact</div>
<div class="tx" style="left:2772.72px;top:429.54px;font-size:24.64px;font-weight:normal;color:#4b5875;transform:scaleX(0.9945);">Supplier</div>
<div class="tx" style="left:2786.00px;top:544.74px;font-size:24.64px;font-weight:normal;color:#4b5875;transform:scaleX(0.9647);">Leave</div>
<div class="tx" style="left:2761.02px;top:571.34px;font-size:24.64px;font-weight:normal;color:#4b5875;transform:scaleX(1.0029);">Messages</div>
<div class="tx" style="left:2766.40px;top:695.14px;font-size:24.64px;font-weight:normal;color:#4b5875;transform:scaleX(1.0125);">Browsing</div>
<div class="tx" style="left:2778.79px;top:723.74px;font-size:24.64px;font-weight:normal;color:#4b5875;transform:scaleX(1.0203);">History</div>
<div class="tx" style="left:2767.31px;top:816.94px;font-size:24.64px;font-weight:normal;color:#4b5875;transform:scaleX(1.0092);">Message</div>
<div class="tx" style="left:2781.80px;top:844.74px;font-size:24.64px;font-weight:normal;color:#4b5875;transform:scaleX(0.9766);">Center</div>
<div class="tx" style="left:2787.52px;top:937.14px;font-size:24.64px;font-weight:normal;color:#4b5875;transform:scaleX(0.9764);">Trade</div>
<div class="tx" style="left:2769.35px;top:965.04px;font-size:24.64px;font-weight:normal;color:#4b5875;transform:scaleX(0.9900);">Manager</div>
<div class="tx" style="left:1347.07px;top:109.57px;font-size:64.29px;font-weight:bold;color:#fe9400;transform:scaleX(0.9466);">Company Overview</div>
<div class="tx" style="left:155.07px;top:1112.62px;font-size:63.29px;font-weight:bold;color:#fe9400;transform:scaleX(0.9717);">Select Trade</div>
<div class="tx" style="left:207.44px;top:1187.07px;font-size:64.29px;font-weight:bold;color:#fe9400;transform:scaleX(0.9584);">Capacity</div>
<svg class="a" id="annsvg" width="2880" height="1387" viewBox="0 0 2880 1387">
 <polygon points="1112,140.5 1204,95.5 1204,131 1339,131 1339,150 1204,150 1204,186" fill="#fe9400"/>
 <polygon points="337,406.5 291.5,497 328,497 328,1101 346,1101 346,497 382.5,497" fill="#fe9400"/>
</svg>
</body></html>
